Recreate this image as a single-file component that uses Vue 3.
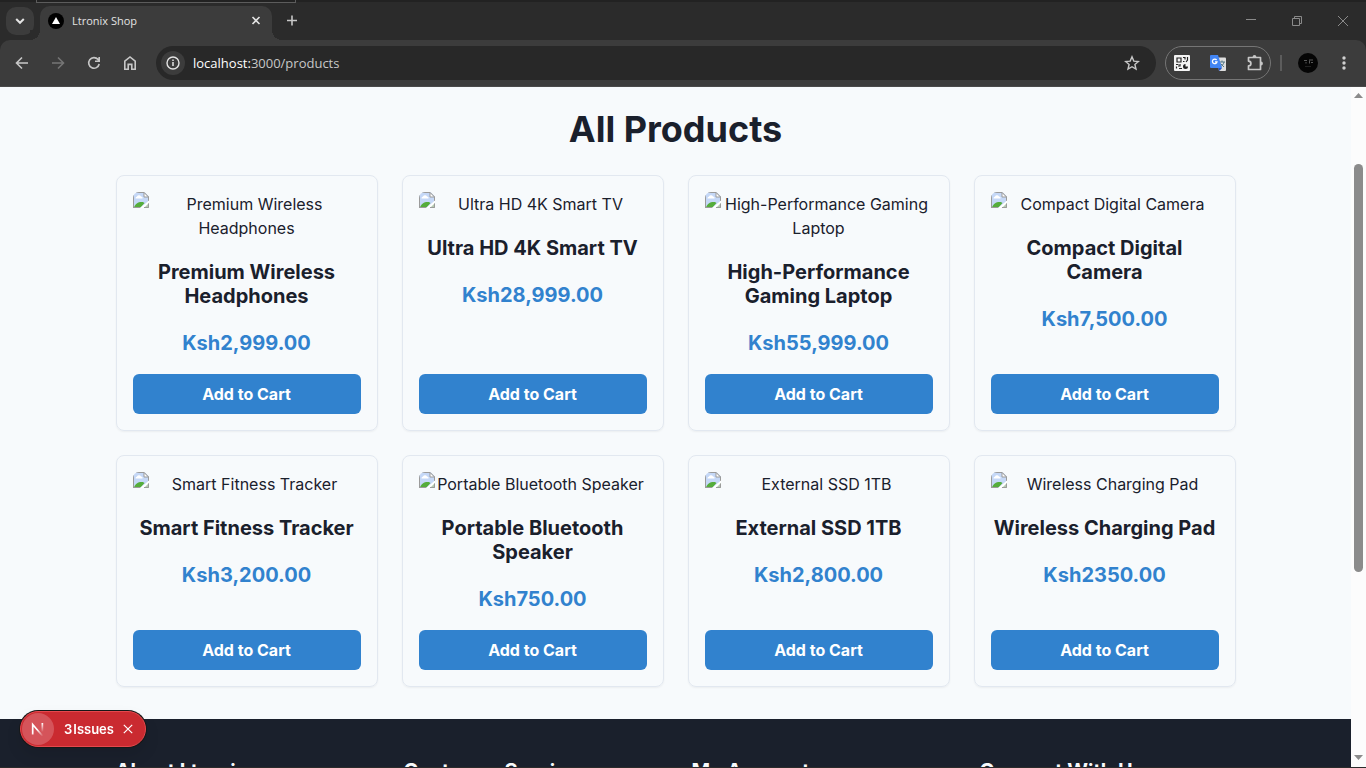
<script setup>
const products = [
  { name: 'Premium Wireless Headphones', price: '2,999.00' },
  { name: 'Ultra HD 4K Smart TV', price: '28,999.00' },
  { name: 'High-Performance Gaming Laptop', price: '55,999.00' },
  { name: 'Compact Digital Camera', price: '7,500.00' },
  { name: 'Smart Fitness Tracker', price: '3,200.00' },
  { name: 'Portable Bluetooth Speaker', price: '750.00' },
  { name: 'External SSD 1TB', price: '2,800.00' },
  { name: 'Wireless Charging Pad', price: '2350.00' },
]
const footerColumns = ['About Ltronix', 'Customer Service', 'My Account', 'Connect With Us']
</script>

<template>
  <div class="window">
    <header class="titlebar">
      <button class="tab-search" aria-label="Search tabs">
        <svg width="28" height="28" viewBox="0 0 28 28"><path d="M10.2 12l3.800 3.800 3.800-3.800" fill="none" stroke="#e3e3e3" stroke-width="2" /></svg>
      </button>
      <div class="tab">
        <svg width="16" height="16" viewBox="0 0 16 16"><circle cx="8" cy="8" r="8" fill="#000" /><path d="M8 4l4 7H4z" fill="#fff" /></svg>
        <span class="tab-title">Ltronix Shop</span>
        <button class="icon-btn" aria-label="Close tab">
          <svg width="16" height="16" viewBox="0 0 16 16"><path d="M4.500 4l7 7M11.500 4l-7 7" stroke="#e3e3e3" stroke-width="1.600" /></svg>
        </button>
      </div>
      <button class="icon-btn new-tab" aria-label="New tab">
        <svg width="16" height="16" viewBox="0 0 16 16"><path d="M8 2.500v10M3 7.500h10" stroke="#c7c7c7" stroke-width="1.600" /></svg>
      </button>
      <div class="window-controls">
        <button class="icon-btn" aria-label="Minimize"><svg width="12" height="12" viewBox="0 0 12 12"><path d="M1 4.500h10" stroke="#8a8a8a" /></svg></button>
        <button class="icon-btn" aria-label="Restore"><svg width="12" height="12" viewBox="0 0 12 12"><path d="M1.500 3.500h7v7h-7zM3.500 3.500v-2h7v7h-2" fill="none" stroke="#8a8a8a" /></svg></button>
        <button class="icon-btn" aria-label="Close"><svg width="12" height="12" viewBox="0 0 12 12"><path d="M1 1l10 10M11 1L1 11" stroke="#8a8a8a" /></svg></button>
      </div>
    </header>

    <nav class="toolbar">
      <div class="nav-buttons">
        <button class="icon-btn" aria-label="Back"><svg width="16" height="16" viewBox="0 0 16 16"><path d="M14 8H3M8 2.500L2.500 8 8 13.500" fill="none" stroke="#c7c7c7" stroke-width="1.600" /></svg></button>
        <button class="icon-btn" aria-label="Forward"><svg width="16" height="16" viewBox="0 0 16 16"><path d="M2 8h11M8 2.500L13.500 8 8 13.500" fill="none" stroke="#757575" stroke-width="1.600" /></svg></button>
        <button class="icon-btn" aria-label="Reload"><svg width="16" height="16" viewBox="0 0 16 16"><path d="M13.200 9A5.300 5.300 0 1 1 12 4.400L13 5.600M13.200 2v4.200H9" fill="none" stroke="#c7c7c7" stroke-width="1.600" /></svg></button>
        <button class="icon-btn" aria-label="Home"><svg width="16" height="16" viewBox="0 0 16 16"><path d="M2.800 6.200L8 2l5.200 4.200v8H9.800V9.400H6.200v4.800H2.800z" fill="none" stroke="#c7c7c7" stroke-width="1.600" /></svg></button>
      </div>
      <div class="address">
        <button class="site-info" aria-label="Site information"><svg width="16" height="16" viewBox="0 0 16 16"><circle cx="8" cy="8" r="6" fill="none" stroke="#e3e3e3" stroke-width="1.400" /><path d="M8 7v4M8 4.600v1.500" stroke="#e3e3e3" stroke-width="1.500" /></svg></button>
        <span class="url"><span class="host">localhost:</span>3000/products</span>
        <button class="icon-btn" aria-label="Bookmark"><svg width="16" height="16" viewBox="0 0 16 16"><path d="M8 1.800l1.800 4.300 4.600.4-3.500 3 1.100 4.600L8 11.700l-4 2.400 1.100-4.600-3.500-3 4.600-.4z" fill="none" stroke="#c7c7c7" stroke-width="1.400" /></svg></button>
      </div>
      <div class="extensions">
        <button class="icon-btn" aria-label="QR code">
          <svg width="16" height="16" viewBox="0 0 16 16"><rect width="16" height="16" rx="1" fill="#f4f4f4" /><path d="M3 3h4v4H3zM9 2.500h2v2M13.500 2v3l-1.500 2M9 6.500h1.500M2 9.500h2.500M6 9v2H4M2.500 11.500v2M5 13.500h3" fill="none" stroke="#222" stroke-width="1.200" /><path d="M11.500 9v2.500H14a2.500 2.500 0 1 1-2.500-2.500z" fill="#222" /></svg>
        </button>
        <button class="icon-btn" aria-label="Translate">
          <svg width="16" height="16" viewBox="0 0 16 16"><path d="M7 2.500h8a1 1 0 0 1 1 1V15a1 1 0 0 1-1 1H9z" fill="#ddd" /><path d="M9 7h6M12 5.500V7M14 7c-.5 2.500-2 4-4 5M10.500 8.500L14 12" fill="none" stroke="#527785" /><path d="M1 0h7l4 13H1a1 1 0 0 1-1-1V1a1 1 0 0 1 1-1z" fill="#4285f4" /><path d="M8 13h4l-2.500 3z" fill="#2454c5" /><path d="M6.600 5A2.300 2.300 0 1 0 7 6.800H5" fill="none" stroke="#fff" stroke-width="1.300" /></svg>
        </button>
        <button class="icon-btn" aria-label="Extensions">
          <svg width="18" height="18" viewBox="0 0 18 18"><path d="M2.500 3.500h12v12h-12v-3.600a2.400 2.400 0 0 0 0-4.800z" fill="none" stroke="#c7c7c7" stroke-width="1.700" stroke-linejoin="round" /><path d="M6.600 3a1.900 1.900 0 0 1 3.800 0zM15 7.600a1.900 1.900 0 0 1 0 3.800z" fill="#c7c7c7" /></svg>
        </button>
      </div>
      <span class="divider"></span>
      <button class="icon-btn profile" aria-label="Profile">
        <svg width="20" height="20" viewBox="0 0 20 20"><circle cx="10" cy="10" r="10" fill="#050505" /><path d="M6 7.500h3M11 7h4M11.500 7.500v3M8 9v1.500M13 9.500h2" stroke="#5a5a5a" /><path d="M7 13.500h6" stroke="#222" /></svg>
      </button>
      <button class="icon-btn" aria-label="Menu"><svg width="16" height="16" viewBox="0 0 16 16" fill="#d0d0d0"><circle cx="8" cy="3" r="1.700" /><circle cx="8" cy="8" r="1.700" /><circle cx="8" cy="13" r="1.700" /></svg></button>
    </nav>

    <div class="viewport">
      <div class="page">
        <main class="container">
          <h1>All Products</h1>
          <div class="grid">
            <article v-for="p in products" :key="p.name" class="card">
              <div class="picture">
                <svg class="broken" width="16" height="16" viewBox="0 0 16 16">
                  <path d="M0 0h11.500L16 4.500V9L9 16H0z" fill="#c5d8f7" />
                  <path d="M2.500 6.500a1.800 1.800 0 0 1 1.500-2 2.200 2.200 0 0 1 4 0 1.500 1.500 0 0 1 1.500 2z" fill="#fff" />
                  <path d="M1 15.500c1-3.500 4-5.500 7.500-5.500 1.500 0 2.500.5 3 1L7.500 15.500z" fill="#55ad3b" />
                  <path d="M.5 16V.500H11l4.500 4.500v4M.5 15.500H7" fill="none" stroke="#9b9b9b" />
                  <path d="M11 .5V5h4.500z" fill="#fff" stroke="#9b9b9b" />
                  <path d="M16 8.500L7 16h3l6-5z" fill="#fff" />
                  <path d="M16 11v5h-5z" fill="#b5cbb0" /><path d="M15.500 11.500v4H11" fill="none" stroke="#9b9b9b" />
                </svg>
                {{ p.name }}
              </div>
              <h2>{{ p.name }}</h2>
              <p class="price">Ksh{{ p.price }}</p>
              <button class="add">Add to Cart</button>
            </article>
          </div>
        </main>
        <footer>
          <div class="footer-grid">
            <h3 v-for="c in footerColumns" :key="c">{{ c }}</h3>
          </div>
        </footer>
      </div>
      <div class="scrollbar">
        <svg width="9" height="5" viewBox="0 0 9 5"><path d="M4.500 0L9 5H0z" fill="#8b8b8b" /></svg>
        <div class="track"><div class="thumb"></div></div>
        <svg width="9" height="5" viewBox="0 0 9 5"><path d="M0 0h9L4.500 5z" fill="#8b8b8b" /></svg>
      </div>
    </div>

    <div class="issues">
      <span class="logo">
        <svg width="18" height="18" viewBox="0 0 18 18">
          <defs>
            <linearGradient id="stem" x1="0" y1="0" x2="0" y2="1"><stop offset="0" stop-color="#fff" /><stop offset="1" stop-color="#fff" stop-opacity="0" /></linearGradient>
            <linearGradient id="slash" gradientUnits="userSpaceOnUse" x1="9" y1="9" x2="14" y2="16"><stop offset="0" stop-color="#fff" /><stop offset="1" stop-color="#fff" stop-opacity="0" /></linearGradient>
          </defs>
          <path d="M3.700 14.500V4.500L14 16.500" fill="none" stroke="url(#slash)" stroke-width="1.700" />
          <rect x="12.500" y="3" width="1.700" height="9" fill="url(#stem)" />
        </svg>
      </span>
      <button class="issues-label"><span>3</span> <span>Issues</span></button>
      <button class="icon-btn" aria-label="Dismiss"><svg width="10" height="10" viewBox="0 0 10 10"><path d="M.8.8l8.400 8.400M9.200.8L.8 9.200" stroke="#fff" stroke-width="1.200" /></svg></button>
    </div>
  </div>
</template>

<style>
body { background: #000; }
</style>

<style scoped>
* { box-sizing: border-box; }
h1, h2, h3, p { margin: 0; }
button { padding: 0; border: 0; background: none; font-family: inherit; color: inherit; }
svg { display: block; }
.window {
  height: 100vh;
  display: flex;
  flex-direction: column;
  overflow: hidden;
  padding-bottom: 1px;
  background: #2b2b2b;
  font-family: Inter, sans-serif;
}
.icon-btn { display: flex; align-items: center; justify-content: center; flex: none; }
.titlebar {
  position: relative;
  display: flex;
  align-items: center;
  height: 40px;
  flex: none;
  border-top: 2px solid #222;
  padding-left: 6px;
  font-family: "Open Sans", sans-serif;
}
.titlebar::before {
  content: "";
  position: absolute;
  top: -2px;
  left: 36px;
  width: 258px;
  height: 2px;
  border: 1px solid #5c5c5c;
  border-top: 0;
}
.tab-search { width: 28px; height: 28px; border-radius: 10px; background: #3c3c3c; }
.tab {
  position: relative;
  display: flex;
  align-items: center;
  gap: 8px;
  width: 232px;
  height: 34px;
  margin: 4px 0 0 6px;
  padding: 0 8px 4px;
  border-radius: 10px 10px 0 0;
  background: #3c3c3c;
}
.tab::before, .tab::after {
  content: "";
  position: absolute;
  bottom: 0;
  width: 10px;
  height: 10px;
}
.tab::before { right: 100%; background: radial-gradient(circle at 0 0, #2b2b2b 10px, #3c3c3c 10px); }
.tab::after { left: 100%; background: radial-gradient(circle at 100% 0, #2b2b2b 10px, #3c3c3c 10px); }
.tab-title { flex: 1; color: #e3e3e3; font-size: 11px; line-height: 16px; }
.new-tab { margin-left: 12px; }
.window-controls { display: flex; gap: 34px; margin-left: auto; padding-right: 17px; }
.toolbar {
  display: flex;
  align-items: center;
  height: 47px;
  flex: none;
  padding: 0 14px;
  border-radius: 10px 10px 0 0;
  border-bottom: 1px solid #4a4a4a;
  background: #3c3c3c;
  font-family: "Open Sans", sans-serif;
}
.nav-buttons { display: flex; gap: 20px; }
.address {
  display: flex;
  align-items: center;
  flex: 1;
  height: 34px;
  margin-left: 18px;
  padding: 0 16px 0 5px;
  border-radius: 17px;
  background: #282828;
}
.site-info { display: flex; align-items: center; justify-content: center; width: 24px; height: 24px; border-radius: 50%; background: #3c3c3c; }
.url { flex: 1; margin-left: 8px; font-size: 13px; line-height: 20px; color: #c7c7c7; }
.host { color: #fff; }
.extensions { display: flex; align-items: center; gap: 20px; height: 34px; margin-left: 9px; padding: 0 6px 0 8px; border: 1px solid #757575; border-radius: 17px; }
.divider { width: 2px; height: 16px; margin-left: 9px; background: #5c5c5c; }
.profile { margin: 0 18px 0 16px; }
.viewport { display: flex; flex: 1; min-height: 0; }
.page { flex: 1; min-width: 0; overflow: hidden; background: #f7fafc; color: #1a202c; }
.container { max-width: 1152px; margin: 0 auto; padding: 20px 16px 32px; }
h1 { margin-bottom: 24px; font-size: 36px; line-height: 44px; font-weight: 700; text-align: center; }
.grid { display: grid; grid-template-columns: repeat(4, minmax(0, 1fr)); gap: 24px; }
.card {
  display: flex;
  flex-direction: column;
  padding: 16px;
  border: 1px solid #e2e8f0;
  border-radius: 8px;
  box-shadow: 0 1px 2px rgba(0, 0, 0, 0.05);
  text-align: center;
}
.picture { margin-bottom: 20px; border-radius: 6px; overflow: hidden; font-size: 16px; line-height: 24px; }
.broken { float: left; }
h2 { margin-bottom: 20px; font-size: 20px; line-height: 24px; font-weight: 700; }
.price { margin-bottom: 16px; font-size: 20px; line-height: 30px; font-weight: 700; color: #3182ce; }
.add { height: 40px; margin-top: auto; border-radius: 6px; background: #3182ce; color: #fff; font-size: 16px; font-weight: 700; }
footer { padding-top: 40px; background: #1a202c; color: #f7fafc; }
.footer-grid { display: grid; grid-template-columns: repeat(4, minmax(0, 1fr)); gap: 32px; max-width: 1152px; margin: 0 auto; padding: 0 16px 40px; }
h3 { font-size: 20px; line-height: 24px; font-weight: 700; }
.scrollbar { display: flex; flex-direction: column; align-items: center; width: 15px; padding: 6px 0 7px; background: #fcfcfc; }
.track { flex: 1; width: 9px; padding: 66px 0 0; }
.thumb { height: 69%; border-radius: 5px; background: #8b8b8b; }
.issues {
  position: fixed;
  left: 20px;
  bottom: 21px;
  display: flex;
  align-items: center;
  height: 36px;
  padding: 0 12px 0 1px;
  border: 1px solid #e5484d;
  border-radius: 18px;
  background: #ca2a30;
  color: #fff;
  box-shadow: 0 0 0 1px #171717, 0 8px 16px rgba(0, 0, 0, 0.1);
}
.logo { display: flex; align-items: center; justify-content: center; width: 32px; height: 32px; border-radius: 50%; background: #d5545a; }
.issues-label { display: flex; gap: 1px; margin: 0 9px 0 10px; font-size: 13px; font-weight: 600; }
</style>
